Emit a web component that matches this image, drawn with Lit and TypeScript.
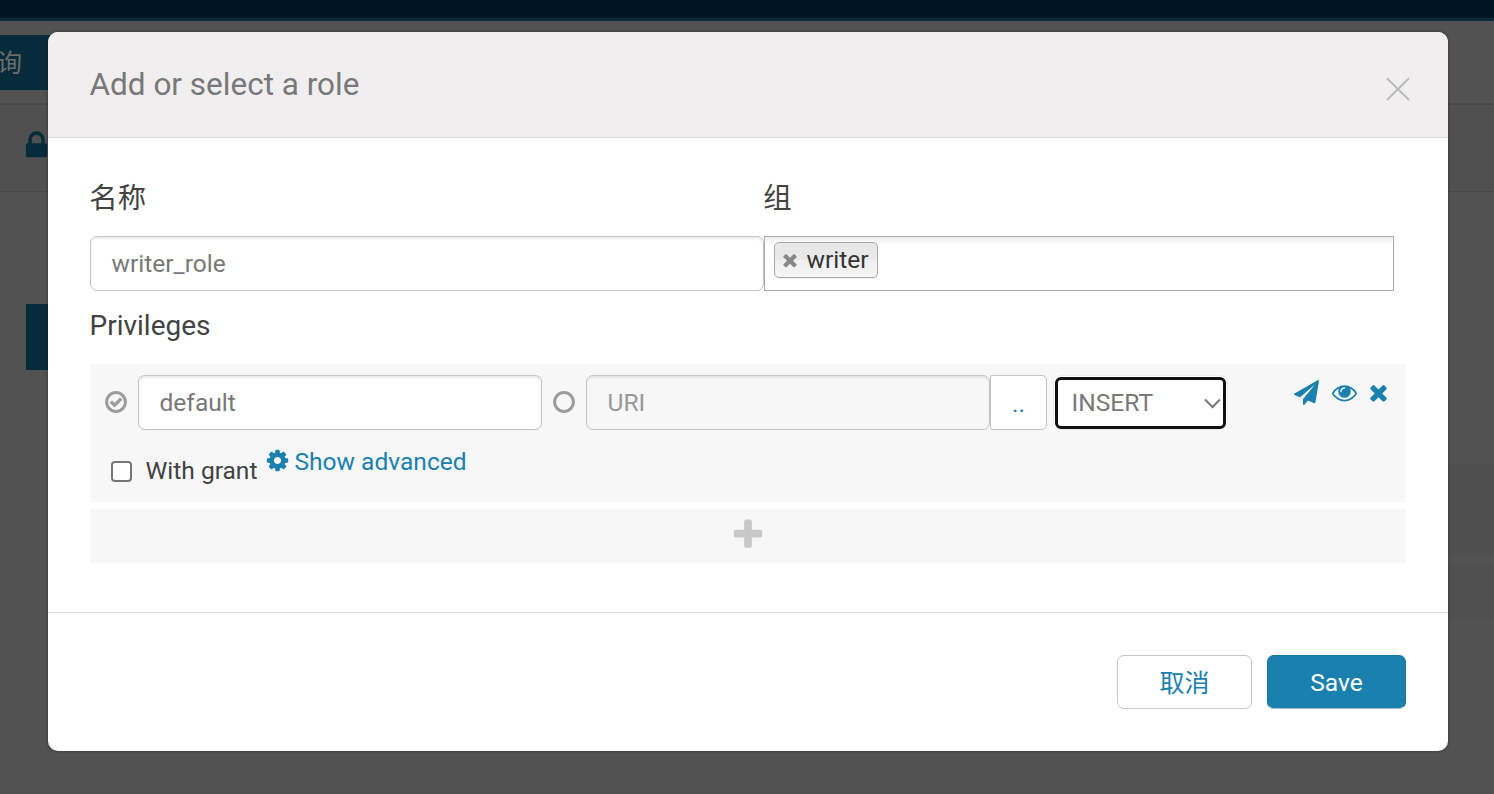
import { LitElement, html, css, svg } from "lit";
import { customElement, property } from "lit/decorators.js";

const ICONS: Record<string, string> = {
  times: "M1490 1322q0 40-28 68l-136 136q-28 28-68 28t-68-28l-294-294-294 294q-28 28-68 28t-68-28l-136-136q-28-28-28-68t28-68l294-294-294-294q-28-28-28-68t28-68l136-136q28-28 68-28t68 28l294 294 294-294q28-28 68-28t68 28l136 136q28 28 28 68t-28 68l-294 294 294 294q28 28 28 68z",
  cog: "M1152 896q0-106-75-181t-181-75-181 75-75 181 75 181 181 75 181-75 75-181zm512-109v222q0 12-8 23t-20 13l-185 28q-19 54-39 91 35 50 107 138 10 12 10 25t-9 23q-27 37-99 108t-94 71q-12 0-26-9l-138-108q-44 23-91 38-16 136-29 186-7 28-36 28h-222q-14 0-24.5-8.5t-11.5-21.5l-28-184q-49-16-90-37l-141 107q-10 9-25 9-14 0-25-11-126-114-165-168-7-10-7-23 0-12 8-23 15-21 51-66.5t54-70.5q-27-50-41-99l-183-27q-13-2-21-12.5t-8-23.5v-222q0-12 8-23t19-13l186-28q14-46 39-92-40-57-107-138-10-12-10-24 0-10 9-23 26-36 98.5-107.5t94.5-71.5q13 0 26 10l138 107q44-23 91-38 16-136 29-186 7-28 36-28h222q14 0 24.5 8.5t11.5 21.5l28 184q49 16 90 37l142-107q9-9 24-9 13 0 25 10 129 119 165 170 7 8 7 22 0 12-8 23-15 21-51 66.5t-54 70.5q26 50 41 98l183 28q13 2 21 12.5t8 23.5z",
  eye: "M1664 960q-152-236-381-353 61 104 61 225 0 185-131.5 316.5t-316.5 131.5-316.5-131.5-131.5-316.5q0-121 61-225-229 117-381 353 133 205 333.5 326.5t434.5 121.5 434.5-121.5 333.5-326.5zm-720-384q0-20-14-34t-34-14q-125 0-214.5 89.5t-89.5 214.5q0 20 14 34t34 14 34-14 14-34q0-86 61-147t147-61q20 0 34-14t14-34zm848 384q0 34-20 69-140 230-376.5 368.5t-499.5 138.5-499.5-139-376.5-368q-20-35-20-69t20-69q140-229 376.5-368t499.5-139 499.5 139 376.5 368q20 35 20 69z",
  plane: "M1764 11q33 24 27 64l-256 1536q-5 29-32 45-14 8-31 8-11 0-24-5l-453-185-242 295q-18 23-49 23-13 0-22-4-19-7-30.5-23.5t-11.5-36.5v-349l864-1059-1069 925-395-162q-37-14-40-55-2-40 32-59l1664-960q15-9 32-9 20 0 36 11z",
  plus: "M1600 736v192q0 40-28 68t-68 28h-416v416q0 40-28 68t-68 28h-192q-40 0-68-28t-28-68v-416h-416q-40 0-68-28t-28-68v-192q0-40 28-68t68-28h416v-416q0-40 28-68t68-28h192q40 0 68 28t28 68v416h416q40 0 68 28t28 68z",
  lock: "M640 768h512v-192q0-106-75-181t-181-75-181 75-75 181v192zm832 96v576q0 40-28 68t-68 28h-960q-40 0-68-28t-28-68v-576q0-40 28-68t68-28h32v-192q0-184 132-316t316-132 316 132 132 316v192h32q40 0 68 28t28 68z",
};

@customElement("ui-icon")
class UiIcon extends LitElement {
  @property() name = "times";
  static styles = css`
    :host { display: block; flex: none; }
    svg { display: block; width: 100%; height: 100%; overflow: visible; }
  `;
  render() {
    return html`<svg viewBox="0 0 1792 1792" fill="currentColor">${svg`<path d=${ICONS[this.name]} />`}</svg>`;
  }
}

@customElement("page-backdrop")
class PageBackdrop extends LitElement {
  static styles = css`
    :host { display: block; height: 794px; background: #525252; overflow: hidden; }
    .nav { height: 18px; background: #001523; border-bottom: 3px solid #082b3b; }
    .bar { height: 84px; padding-top: 14px; box-sizing: border-box; border-bottom: 2px solid #494949; }
    .query { display: flex; align-items: center; justify-content: flex-end; width: 120px; height: 55px; margin-left: -60px; padding-right: 38px; box-sizing: border-box; background: #082b3b; color: #6c6c6c; font: 25px/53px "Noto Sans CJK SC", sans-serif; white-space: nowrap; }
    .query span { height: 55px; }
    .sub { height: 62px; background: #505050; border-bottom: 1px solid #484848; padding: 24px 0 0 20px; }
    .lock { width: 33px; height: 33px; color: #082b3b; }
    .block { width: 60px; height: 66px; margin: 112px 0 0 26px; background: #082b3b; }
    .rows { margin: 94px 0 0 700px; height: 91px; background: #4f4f4f; }
    .second { margin: 8px 0 0 700px; height: 56px; background: #505050; }
    .end { margin-top: 174px; height: 2px; background: #4c4c4c; }
  `;
  render() {
    return html`
      <div class="nav"></div>
      <div class="bar"><div class="query"><span>查询</span></div></div>
      <div class="sub"><ui-icon class="lock" name="lock"></ui-icon></div>
      <div class="block"></div>
      <div class="rows"></div>
      <div class="second"></div>
      <div class="end"></div>
    `;
  }
}

@customElement("app-root")
class AppRoot extends LitElement {
  static styles = css`
    :host { display: block; position: relative; width: 1494px; height: 794px; overflow: hidden; font-family: Roboto, "Noto Sans CJK SC", sans-serif; font-size: 24.55px; color: #424242; }
    * { box-sizing: border-box; }
    .modal { position: absolute; left: 48px; top: 32px; width: 1400px; height: 719px; border-radius: 10px; background: #fff; overflow: hidden; display: flex; flex-direction: column; }
    .shade { position: absolute; left: 48px; top: 32px; width: 1400px; height: 719px; border-radius: 10px; box-shadow: 0 0 3px 0 rgba(0,0,0,.45); }
    .header { height: 106px; background: #f0eeef; border-bottom: 1px solid #dadada; padding: 0 38px 0 41.5px; display: flex; justify-content: space-between; }
    .title { font-size: 31.5px; line-height: 38px; padding-top: 34px; color: #787878; white-space: nowrap; }
    .close { width: 24px; height: 24px; margin-top: 45px; }
    .body { height: 475px; border-bottom: 1px solid #dcdcdc; padding: 38px 42px 0; }
    .fields { display: grid; grid-template-columns: 674px 630px; }
    .label { font-size: 28.4px; line-height: 42px; height: 60px; padding-top: 2px; margin-left: -0.7px; white-space: nowrap; }
    .input { height: 55px; border: 1px solid #c3c3c3; border-radius: 7px; background: #fff; box-shadow: inset 0 2px 2px rgba(0,0,0,.075); padding: 0 20.5px; line-height: 53px; color: #787878; white-space: nowrap; }
    .choices { height: 55px; border: 1px solid #aaa; background: linear-gradient(#eee 0, #fff 8px); padding: 5px 9px; }
    .chip { width: 104px; height: 36px; border: 1px solid #aaa; border-radius: 5px; background: linear-gradient(#e7e7e7, #e9e9e9 48%, #f0f0f0 52%, #f4f4f4); display: flex; align-items: center; color: #333; line-height: 34px; box-shadow: 0 1px 0 rgba(0,0,0,.05); }
    .chip ui-icon { width: 20px; height: 20px; margin: 0 6.5px 0 5px; color: #888; }
    .priv { height: 73px; padding-top: 14px; margin-left: -0.5px; font-size: 28px; line-height: 42px; }
    .card { height: 138px; background: #f7f7f7; padding: 11px 0 0 15px; }
    .line { display: flex; }
    .line > * { flex: none; }
    .radio { width: 22px; height: 22px; margin: 16px 11px 0 0; display: block; }
    .radio.second { margin-left: 11px; }
    .w404 { width: 404px; }
    .off { background: #f7f7f7; color: #999; }
    .browse { width: 57px; height: 55px; border: 1px solid #c3c3c3; border-radius: 2px 5px 5px 2px; background: #fff; color: #1a80ae; text-align: center; line-height: 56px; }
    .selectwrap { width: 175px; height: 55px; margin-left: 6px; border: 1px solid #ececec; border-radius: 8px; padding: 1px; background: #fff; }
    .select { width: 171px; height: 52px; border: 3px solid #101010; border-radius: 6px; padding: 0 2px 0 13.5px; display: flex; align-items: center; justify-content: space-between; color: #787878; line-height: 46px; }
    .chev { width: 17px; height: 11px; margin-top: 1px; }
    .actions { display: flex; margin: 4.5px 0 0 65.5px; gap: 13px; color: #1a80ae; }
    .actions ui-icon { width: 25px; height: 25px; }
    .actions ui-icon:last-child { margin-left: -3.5px; }
    .line2 { display: flex; padding: 12px 0 0 6px; white-space: nowrap; }
    .check { width: 21px; height: 21px; margin: 19px 14px 0 0; border: 2px solid #767676; border-radius: 4px; background: #fff; }
    .grant { line-height: 30px; padding-top: 14px; margin: 0 8px 0 -0.5px; }
    .adv { display: flex; color: #1a80ae; line-height: 30px; padding-top: 5px; height: 35px; }
    .adv ui-icon { width: 25px; height: 25px; margin: 1px 4px 0 0; }
    .add { margin-top: 7px; height: 54px; background: #f7f7f7; display: flex; justify-content: center; padding: 8px 1px 0 0; color: #c8c8c8; }
    .add ui-icon { width: 36px; height: 36px; }
    .footer { flex: 1; padding: 42px 42px 0; display: flex; justify-content: flex-end; gap: 15px; }
    .btn { height: 54px; border: 1px solid #c6c6c6; border-radius: 7px; text-align: center; line-height: 54px; color: #1a80ae; }
    .cancel { width: 135px; font-size: 25px; line-height: 55px; }
    .save { width: 139px; background: #1a80ae; border-color: #1875a0; border-bottom-color: #a5bcc8; color: #fff; }
  `;

  render() {
    return html`
      <page-backdrop></page-backdrop>
      <div class="shade"></div>
      <div class="modal">
        <div class="header">
          <div class="title">Add or select a role</div>
          <svg class="close" viewBox="0 0 24 24" fill="none" stroke="#bbb" stroke-width="2"><path d="M1 1.2 23 23M23 1.2 1 23" /></svg>
        </div>
        <div class="body">
          <div class="fields">
            <div class="label">名称</div>
            <div class="label">组</div>
            <div class="input">writer_role</div>
            <div class="choices"><div class="chip"><ui-icon name="times"></ui-icon><span>writer</span></div></div>
          </div>
          <div class="priv">Privileges</div>
          <div class="card">
            <div class="line">
              <svg class="radio" viewBox="0 0 22 22" fill="none" stroke="#9c9c9c"><circle cx="11" cy="11" r="9.4" stroke-width="3" /><path d="M5.8 10.5 9.6 14.2 16.2 7.6" stroke-width="3.4" /></svg>
              <div class="input w404">default</div>
              <svg class="radio second" viewBox="0 0 22 22" fill="none" stroke="#9c9c9c"><circle cx="11" cy="11" r="9.4" stroke-width="3" /></svg>
              <div class="input w404 off">URI</div>
              <div class="browse">..</div>
              <div class="selectwrap"><div class="select"><span>INSERT</span>
                <svg class="chev" viewBox="0 0 17 11" fill="none" stroke="#777" stroke-width="2"><path d="M1 1.5 8.5 9 16 1.5" /></svg></div></div>
              <div class="actions"><ui-icon name="plane"></ui-icon><ui-icon name="eye"></ui-icon><ui-icon name="times"></ui-icon></div>
            </div>
            <div class="line2">
              <div class="check"></div>
              <div class="grant">With grant</div>
              <div class="adv"><ui-icon name="cog"></ui-icon><span>Show advanced</span></div>
            </div>
          </div>
          <div class="add"><ui-icon name="plus"></ui-icon></div>
        </div>
        <div class="footer">
          <div class="btn cancel">取消</div>
          <div class="btn save">Save</div>
        </div>
      </div>
    `;
  }
}
